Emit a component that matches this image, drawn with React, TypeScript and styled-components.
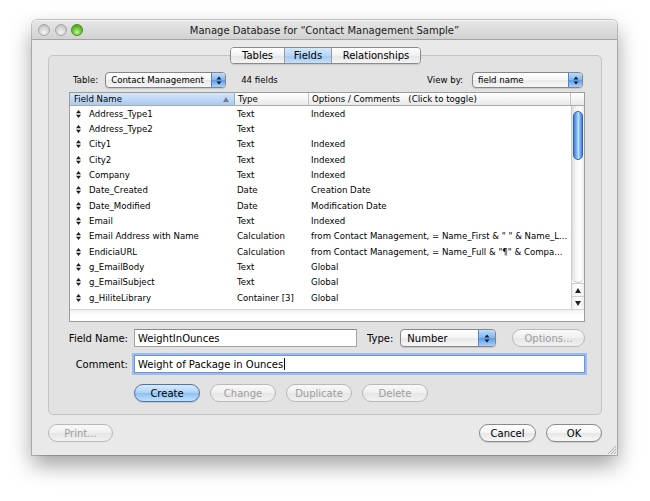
import React from "react";
import styled, { createGlobalStyle, css } from "styled-components";

const GlobalStyle = createGlobalStyle`
  html, body {
    margin: 0;
    padding: 0;
    background: #ffffff;
  }
  body {
    font-family: "DejaVu Sans", "Liberation Sans", sans-serif;
    color: #000;
  }
  * {
    box-sizing: border-box;
  }
`;

const Page = styled.div`
  width: 650px;
  height: 501px;
  padding: 20px 0 0 32px;
`;

const Window = styled.div`
  position: relative;
  width: 585px;
  height: 435px;
  display: flex;
  flex-direction: column;
  background: #e9e9e9;
  border-radius: 5px 5px 0 0;
  box-shadow: 0 0 0 1px rgba(0, 0, 0, 0.2), 0 10px 22px rgba(0, 0, 0, 0.38);
`;

const TitleBar = styled.div`
  height: 20px;
  display: grid;
  grid-template-columns: 1fr auto 1fr;
  align-items: center;
  padding: 0 6px;
  border-radius: 5px 5px 0 0;
  border-top: 1px solid #f4f4f4;
  border-bottom: 1px solid #a4a4a4;
  background: linear-gradient(#e6e6e6, #d2d2d2);
`;

const Lights = styled.div`
  display: flex;
  gap: 4.5px;
`;

const Light = styled.span<{ $green?: boolean }>`
  width: 12px;
  height: 12px;
  border-radius: 50%;
  ${(p) =>
    p.$green
      ? css`
          background: radial-gradient(circle at 50% 72%, #c8f58f 0%, #67c52f 50%, #3e8e1a 100%);
          border: 1px solid #4f8a2c;
        `
      : css`
          background: radial-gradient(circle at 50% 72%, #f4f4f4 0%, #d3d3d3 55%, #b4b4b4 100%);
          border: 1px solid #a6a6a6;
        `}
`;

const Title = styled.div`
  font-size: 10px;
  color: #1a1a1a;
  white-space: nowrap;
`;

const Body = styled.div`
  flex: 1;
  display: flex;
  flex-direction: column;
  padding: 7px 15px 0 16px;
`;

const TabBar = styled.div`
  position: relative;
  z-index: 1;
  align-self: center;
  display: flex;
  height: 17px;
  margin-bottom: -9px;
  margin-left: 1px;
  border: 1px solid #8a8a8a;
  border-radius: 4px;
  overflow: hidden;
  box-shadow: 0 1px 1px rgba(0, 0, 0, 0.12);
`;

const Tab = styled.div<{ $w: number; $active?: boolean }>`
  width: ${(p) => p.$w}px;
  display: flex;
  align-items: center;
  justify-content: center;
  font-size: 10px;
  border-left: 1px solid #9a9a9a;
  background: linear-gradient(#ffffff, #f2f2f2 50%, #e4e4e4 51%, #f4f4f4);
  &:first-child {
    border-left: none;
  }
  ${(p) =>
    p.$active &&
    css`
      background: linear-gradient(#d6e8fb, #b7d5f6 50%, #a2c7f1 51%, #c4e0fb);
    `}
`;

const Group = styled.div`
  height: 360px;
  display: flex;
  flex-direction: column;
  padding: 16px 16px 0 20px;
  border: 1px solid #c4c4c4;
  border-radius: 5px;
  background: #e2e2e2;
`;

const TableRow = styled.div`
  height: 16px;
  display: flex;
  align-items: center;
  padding: 0 2px 0 4px;
  font-size: 8.6px;
`;

const Label = styled.span<{ $gap?: number }>`
  margin-right: ${(p) => p.$gap ?? 0}px;
  white-space: nowrap;
`;

const Popup = styled.div<{ $w: number; $h?: number; $size?: number; $pad?: number }>`
  width: ${(p) => p.$w}px;
  height: ${(p) => p.$h ?? 16}px;
  display: flex;
  align-items: center;
  justify-content: space-between;
  padding-left: ${(p) => p.$pad ?? 5}px;
  font-size: ${(p) => p.$size ?? 8.6}px;
  white-space: nowrap;
  border: 1px solid #868686;
  border-radius: 4px;
  overflow: hidden;
  background: linear-gradient(#ffffff, #f4f4f4 50%, #e8e8e8 51%, #f7f7f7);
  box-shadow: 0 1px 1px rgba(0, 0, 0, 0.12);
`;

const PopupText = styled.span`
  flex: 1;
  overflow: hidden;
`;

const PopupCap = styled.div<{ $w?: number }>`
  width: ${(p) => p.$w ?? 14}px;
  flex: none;
  height: 100%;
  display: flex;
  align-items: center;
  justify-content: center;
  border-left: 1px solid #5b83c0;
  background: linear-gradient(#bcdcfb, #7fb5ef 50%, #5c9ae6 51%, #a9d2fb);
`;

const Spacer = styled.div`
  flex: 1;
`;

const ListFrame = styled.div`
  margin-top: 4px;
  height: 230px;
  display: flex;
  flex-direction: column;
  border: 1px solid #9b9b9b;
  background: #ffffff;
`;

const HeaderRow = styled.div`
  height: 13px;
  display: grid;
  grid-template-columns: 165px 74px 1fr 13px;
  border-bottom: 1px solid #a9a9a9;
  background: linear-gradient(#ffffff, #e9e9e9);
`;

const HeaderCell = styled.div<{ $sorted?: boolean; $pad?: number }>`
  display: flex;
  align-items: center;
  justify-content: space-between;
  padding: 0 5px 0 ${(p) => p.$pad ?? 3}px;
  font-size: 8.6px;
  white-space: nowrap;
  overflow: hidden;
  border-right: 1px solid #c4c4c4;
  &:last-child {
    border-right: none;
  }
  ${(p) =>
    p.$sorted &&
    css`
      background: linear-gradient(#d4e6f9, #a9cbf0);
      border-right-color: #8fb0d8;
    `}
`;

const ListBody = styled.div`
  height: 203px;
  display: flex;
`;

const Rows = styled.div`
  flex: 1;
  overflow: hidden;
`;

const FieldRow = styled.div`
  height: 15.33px;
  display: grid;
  grid-template-columns: 165px 74px 1fr;
  align-items: center;
  font-size: 8.6px;
  white-space: nowrap;
`;

const NameCell = styled.div`
  display: flex;
  align-items: center;
  padding-left: 6px;
  gap: 8px;
`;

const Cell = styled.div`
  padding-left: 2px;
  overflow: hidden;
`;

const Scrollbar = styled.div`
  width: 13px;
  display: flex;
  flex-direction: column;
  border-left: 1px solid #cacaca;
`;

const Track = styled.div`
  flex: 1;
  padding: 5px 0 0 1px;
  border-bottom-left-radius: 6px;
  border-bottom-right-radius: 6px;
  border-bottom: 1px solid #c9c9c9;
  background: linear-gradient(to right, #dedede, #f6f6f6 35%, #ffffff 70%, #ececec);
`;

const Thumb = styled.div`
  width: 10px;
  height: 49px;
  border-radius: 5px;
  border: 1px solid #2d63b6;
  background: linear-gradient(to right, #3f7fdb, #8cc0f5 40%, #c0e0fc 55%, #6aa7ec 80%, #3f7fdb);
`;

const ArrowBox = styled.div`
  height: 13px;
  display: flex;
  align-items: center;
  justify-content: center;
  border-top: 1px solid #d0d0d0;
  background: linear-gradient(to right, #f0f0f0, #ffffff 50%, #ededed);
`;

const BottomStrip = styled.div`
  flex: 1;
  border-top: 1px solid #d4d4d4;
  background: linear-gradient(#f1f1f1, #ffffff 50%);
`;

const FormRow = styled.div<{ $top: number }>`
  display: flex;
  align-items: center;
  margin-top: ${(p) => p.$top}px;
  margin-left: -4px;
  font-size: 10px;
`;

const FormLabel = styled.span<{ $w?: number }>`
  width: ${(p) => p.$w ?? 63}px;
  text-align: right;
  margin-right: 6px;
  white-space: nowrap;
`;

const TextField = styled.div<{ $w?: number; $focus?: boolean }>`
  width: ${(p) => (p.$w ? `${p.$w}px` : "auto")};
  flex: ${(p) => (p.$w ? "none" : "1")};
  height: 18px;
  display: flex;
  align-items: center;
  padding-left: 3px;
  background: #ffffff;
  border: 1px solid #a2a2a2;
  border-top-color: #8a8a8a;
  white-space: nowrap;
  ${(p) =>
    p.$focus &&
    css`
      border-color: #6d96d4;
      box-shadow: 0 0 0 2px #9bbdee;
    `}
`;

const Caret = styled.span`
  display: inline-block;
  width: 1px;
  height: 12px;
  margin-left: 1px;
  background: #000;
`;

const PushButton = styled.div<{ $w: number; $kind?: "default" | "disabled" }>`
  width: ${(p) => p.$w}px;
  height: 18px;
  display: flex;
  align-items: center;
  justify-content: center;
  font-size: 10px;
  border-radius: 9px;
  border: 1px solid #8a8a8a;
  background: linear-gradient(#ffffff, #f5f5f5 50%, #e6e6e6 51%, #f8f8f8);
  box-shadow: 0 1px 1px rgba(0, 0, 0, 0.12);
  white-space: nowrap;
  ${(p) =>
    p.$kind === "disabled" &&
    css`
      color: #9d9d9d;
      border-color: #b9b9b9;
      box-shadow: none;
      background: linear-gradient(#f9f9f9, #efefef 50%, #e6e6e6 51%, #f1f1f1);
    `}
  ${(p) =>
    p.$kind === "default" &&
    css`
      border-color: #4d73ad;
      background: linear-gradient(#d9ebfc, #acd1f6 50%, #8dc0f1 51%, #c3e2fc);
    `}
`;

const ButtonRow = styled.div`
  display: flex;
  gap: 10px;
  margin-top: 11px;
  margin-left: 65px;
`;

const Footer = styled.div`
  display: flex;
  align-items: center;
  gap: 10px;
  margin-top: 9px;
`;

const Grip = styled.svg`
  position: absolute;
  right: 1px;
  bottom: 1px;
`;

const UpDown = ({ color = "#1d1d1d" }: { color?: string }) => (
  <svg width="5" height="8" viewBox="0 0 5 8">
    <polygon points="0,3.2 2.5,0 5,3.2" fill={color} />
    <polygon points="0,4.8 2.5,8 5,4.8" fill={color} />
  </svg>
);

const PopupArrows = () => (
  <svg width="6" height="9" viewBox="0 0 6 9">
    <polygon points="0.5,3.5 3,0.5 5.5,3.5" fill="#0d1a33" />
    <polygon points="0.5,5.5 3,8.5 5.5,5.5" fill="#0d1a33" />
  </svg>
);

const Triangle = ({ up, color = "#222" }: { up?: boolean; color?: string }) => (
  <svg width="6" height="5" viewBox="0 0 6 5">
    <polygon points={up ? "0,5 3,0 6,5" : "0,0 3,5 6,0"} fill={color} />
  </svg>
);

const fields: [string, string, string][] = [
  ["Address_Type1", "Text", "Indexed"],
  ["Address_Type2", "Text", ""],
  ["City1", "Text", "Indexed"],
  ["City2", "Text", "Indexed"],
  ["Company", "Text", "Indexed"],
  ["Date_Created", "Date", "Creation Date"],
  ["Date_Modified", "Date", "Modification Date"],
  ["Email", "Text", "Indexed"],
  ["Email Address with Name", "Calculation", "from Contact Management, = Name_First & \" \" & Name_L..."],
  ["EndiciaURL", "Calculation", "from Contact Management, = Name_Full & \"¶\"  & Compa..."],
  ["g_EmailBody", "Text", "Global"],
  ["g_EmailSubject", "Text", "Global"],
  ["g_HiliteLibrary", "Container [3]", "Global"],
  ["g_HiliteLogo", "Container [3]", "Global"],
];

export default function App() {
  return (
    <Page>
      <GlobalStyle />
      <Window>
        <TitleBar>
          <Lights>
            <Light />
            <Light />
            <Light $green />
          </Lights>
          <Title>Manage Database for “Contact Management Sample”</Title>
          <div />
        </TitleBar>

        <Body>
          <TabBar>
            <Tab $w={53}>Tables</Tab>
            <Tab $w={47} $active>
              Fields
            </Tab>
            <Tab $w={89}>Relationships</Tab>
          </TabBar>

          <Group>
            <TableRow>
              <Label $gap={7}>Table:</Label>
              <Popup $w={121}>
                <PopupText>Contact Management</PopupText>
                <PopupCap>
                  <PopupArrows />
                </PopupCap>
              </Popup>
              <Label style={{ marginLeft: 15 }}>44 fields</Label>
              <Spacer />
              <Label $gap={9}>View by:</Label>
              <Popup $w={111}>
                <PopupText>field name</PopupText>
                <PopupCap>
                  <PopupArrows />
                </PopupCap>
              </Popup>
            </TableRow>

            <ListFrame>
              <HeaderRow>
                <HeaderCell $sorted $pad={4}>
                  <span>Field Name</span>
                  <Triangle up color="#6f7f93" />
                </HeaderCell>
                <HeaderCell>Type</HeaderCell>
                <HeaderCell>Options / Comments&nbsp;&nbsp;&nbsp;(Click to toggle)</HeaderCell>
                <HeaderCell />
              </HeaderRow>
              <ListBody>
                <Rows>
                  {fields.map(([name, type, opts]) => (
                    <FieldRow key={name}>
                      <NameCell>
                        <UpDown />
                        <span>{name}</span>
                      </NameCell>
                      <Cell>{type}</Cell>
                      <Cell>{opts}</Cell>
                    </FieldRow>
                  ))}
                </Rows>
                <Scrollbar>
                  <Track>
                    <Thumb />
                  </Track>
                  <ArrowBox>
                    <Triangle up />
                  </ArrowBox>
                  <ArrowBox>
                    <Triangle />
                  </ArrowBox>
                </Scrollbar>
              </ListBody>
              <BottomStrip />
            </ListFrame>

            <FormRow $top={7}>
              <FormLabel>Field Name:</FormLabel>
              <TextField $w={223}>WeightInOunces</TextField>
              <Label $gap={7} style={{ marginLeft: 10 }}>
                Type:
              </Label>
              <Popup $w={96} $h={18} $size={10} $pad={6}>
                <PopupText>Number</PopupText>
                <PopupCap $w={17}>
                  <PopupArrows />
                </PopupCap>
              </Popup>
              <Spacer />
              <PushButton $w={73} $kind="disabled">
                Options...
              </PushButton>
            </FormRow>

            <FormRow $top={8}>
              <FormLabel>Comment:</FormLabel>
              <TextField $focus>
                Weight of Package in Ounces
                <Caret />
              </TextField>
            </FormRow>

            <ButtonRow>
              <PushButton $w={66} $kind="default">
                Create
              </PushButton>
              <PushButton $w={66} $kind="disabled">
                Change
              </PushButton>
              <PushButton $w={66} $kind="disabled">
                Duplicate
              </PushButton>
              <PushButton $w={66} $kind="disabled">
                Delete
              </PushButton>
            </ButtonRow>
          </Group>

          <Footer>
            <PushButton $w={65} $kind="disabled">
              Print...
            </PushButton>
            <Spacer />
            <PushButton $w={57}>Cancel</PushButton>
            <PushButton $w={56}>OK</PushButton>
          </Footer>
        </Body>

        <Grip width="10" height="10" viewBox="0 0 10 10">
          <line x1="2" y1="10" x2="10" y2="2" stroke="#9a9a9a" strokeWidth="0.8" />
          <line x1="5" y1="10" x2="10" y2="5" stroke="#9a9a9a" strokeWidth="0.8" />
          <line x1="8" y1="10" x2="10" y2="8" stroke="#9a9a9a" strokeWidth="0.8" />
        </Grip>
      </Window>
    </Page>
  );
}
